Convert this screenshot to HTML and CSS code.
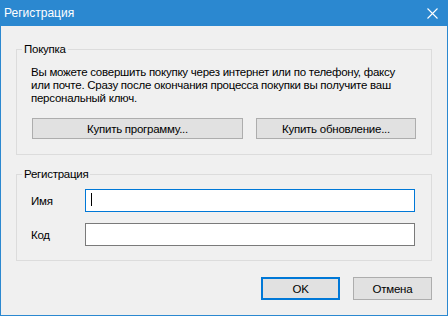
FILE: index.html
```html
<!DOCTYPE html>
<html lang="ru">
<head>
  <meta charset="UTF-8" />
  <title>Регистрация</title>
  <link rel="stylesheet" href="styles.css">
</head>
<body>
<div class="window">
  <div class="titlebar">
    <span class="title">Регистрация</span>
    <svg class="close" width="11" height="11" viewBox="0 0 11 11">
      <path d="M0.5 0.5 L10.5 10.5 M10.5 0.5 L0.5 10.5" stroke="#fff" stroke-width="1.1" fill="none"/>
    </svg>
  </div>

  <div class="content">
    <fieldset class="group">
      <legend>Покупка</legend>
      <div class="group-body">
        <p class="info">Вы можете совершить покупку через интернет или по телефону, факсу<br>или почте. Сразу после окончания процесса покупки вы получите ваш<br>персональный ключ.</p>
        <div class="buy-row">
          <button class="btn btn-program">Купить программу...</button>
          <button class="btn btn-update">Купить обновление...</button>
        </div>
      </div>
    </fieldset>

    <fieldset class="group group-reg">
      <legend>Регистрация</legend>
      <div class="group-body reg-body">
        <div class="field-row">
          <label class="label">Имя</label>
          <div class="field focused"><span class="caret"></span></div>
        </div>
        <div class="field-row">
          <label class="label">Код</label>
          <div class="field"></div>
        </div>
      </div>
    </fieldset>

    <div class="footer">
      <button class="btn btn-dlg default">OK</button>
      <button class="btn btn-dlg">Отмена</button>
    </div>
  </div>
</div>
</body>
</html>
```

FILE: styles.css
```css
* {
  margin: 0;
  padding: 0;
  box-sizing: border-box;
}

html, body {
  width: 448px;
  height: 316px;
  overflow: hidden;
  font-family: 'Liberation Sans', Arial, sans-serif;
  font-size: 11.5px;
  letter-spacing: -0.25px;
  color: #000;
  background: #f0f0f0;
}

/* Fensterrahmen */
.window {
  width: 448px;
  height: 316px;
  border: 1px solid #2b88d0;
  border-top: none;
  display: flex;
  flex-direction: column;
}

.titlebar {
  flex: none;
  height: 26px;
  margin: 0 -1px;
  background: #2b88d0;
  color: #fff;
  display: flex;
  align-items: center;
  justify-content: space-between;
  padding: 0 10px 0 4px;
}

.title {
  font-size: 12px;
  letter-spacing: 0;
  line-height: 14px;
}

.close {
  display: block;
}

.content {
  flex: 1;
  padding: 15px 15px 0 15px;
  display: flex;
  flex-direction: column;
}

/* Gruppen */
.group {
  border: 1px solid #dcdcdc;
  min-width: 0;
  padding: 0;
}

.group legend {
  margin-left: 5px;
  padding: 0 2px;
  line-height: 16px;
}

.group-body {
  padding: 0 15px 15px 14px;
}

.info {
  line-height: 13px;
  padding-top: 9px;
  white-space: nowrap;
}

.buy-row {
  display: flex;
  gap: 13px;
  margin-top: 13px;
  padding-left: 1px;
}

.btn {
  font-family: inherit;
  font-size: 11.5px;
  letter-spacing: -0.25px;
  color: #000;
  background: #e1e1e1;
  border: 1px solid #adadad;
  height: 21px;
  line-height: 18px;
}

.btn-program {
  width: 211px;
}

.btn-update {
  width: 160px;
}

.group-reg {
  margin-top: 11px;
}

.reg-body {
  padding: 7px 16px 14px 14px;
  display: flex;
  flex-direction: column;
  gap: 11px;
}

.field-row {
  display: flex;
  align-items: center;
}

.label {
  width: 54px;
}

.field {
  flex: 1;
  height: 23px;
  background: #fff;
  border: 1px solid #7a7a7a;
  padding: 3px 5px;
}

.field.focused {
  border-color: #0078d7;
}

.caret {
  display: block;
  width: 1px;
  height: 13px;
  background: #000;
}

/* Dialog-Knöpfe */
.footer {
  display: flex;
  justify-content: flex-end;
  gap: 13px;
  margin-top: 16px;
}

.btn-dlg {
  width: 79px;
  height: 23px;
}

.btn-dlg.default {
  border: 2px solid #0078d7;
}
```
